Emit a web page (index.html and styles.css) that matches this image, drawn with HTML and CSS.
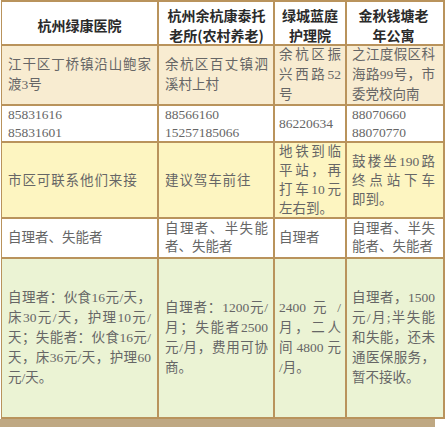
FILE: index.html
```html
<!DOCTYPE html>
<html lang="zh-CN">
<head>
<meta charset="utf-8">
<title>养老机构</title>
<link rel="stylesheet" href="styles.css">
</head>
<body>
<div class="tbl">
  <div class="c c1 hd"><span class="l">杭州绿康医院</span></div>
  <div class="c c2 hd"><span class="l">杭州余杭康泰托</span><span class="l">老所(农村养老)</span></div>
  <div class="c c3 hd"><span class="l">绿城蓝庭</span><span class="l">护理院</span></div>
  <div class="c c4 hd"><span class="l">金秋钱塘老</span><span class="l">年公寓</span></div>

  <div class="c c1 addr"><span class="l">江干区丁桥镇沿山鲍家</span><span class="l">渡3号</span></div>
  <div class="c c2 addr"><span class="l">余杭区百丈镇泗</span><span class="l">溪村上村</span></div>
  <div class="c c3 addr"><span class="l">余杭区振</span><span class="l">兴西路52</span><span class="l">号</span></div>
  <div class="c c4 addr"><span class="l">之江度假区科</span><span class="l">海路99号，市</span><span class="l">委党校向南</span></div>

  <div class="c c1 tel"><span class="l">85831616</span><span class="l">85831601</span></div>
  <div class="c c2 tel"><span class="l">88566160</span><span class="l">15257185066</span></div>
  <div class="c c3 tel"><span class="l">86220634</span></div>
  <div class="c c4 tel"><span class="l">88070660</span><span class="l">88070770</span></div>

  <div class="c c1 way wide"><span class="l">市区可联系他们来接</span></div>
  <div class="c c2 way wide"><span class="l">建议驾车前往</span></div>
  <div class="c c3 way"><span class="l">地铁到临</span><span class="l">平站，再</span><span class="l">打车10元</span><span class="l">左右到。</span></div>
  <div class="c c4 way"><span class="l">鼓楼坐190路</span><span class="l">终点站下车</span><span class="l">即到。</span></div>

  <div class="c c1 kind"><span class="l">自理者、失能者</span></div>
  <div class="c c2 kind"><span class="l">自理者、半失能</span><span class="l">者、失能者</span></div>
  <div class="c c3 kind"><span class="l">自理者</span></div>
  <div class="c c4 kind"><span class="l">自理者、半失</span><span class="l">能者、失能者</span></div>

  <div class="c c1 price"><span class="l">自理者：伙食16元/天，</span><span class="l">床30元/天，护理10元/</span><span class="l">天；失能者：伙食16元/</span><span class="l">天，床36元/天，护理60</span><span class="l">元/天。</span></div>
  <div class="c c2 price"><span class="l">自理者：1200元/</span><span class="l">月；失能者2500</span><span class="l">元/月，费用可协</span><span class="l">商。</span></div>
  <div class="c c3 price"><span class="l">2400 元 /</span><span class="l">月，二人</span><span class="l">间4800元</span><span class="l">/月。</span></div>
  <div class="c c4 price"><span class="l">自理者，1500</span><span class="l">元/月;半失能</span><span class="l">和失能，还未</span><span class="l">通医保服务，</span><span class="l">暂不接收。</span></div>
</div>
<div class="strip"></div>
</body>
</html>
```

FILE: styles.css
```css
* { box-sizing: border-box; }
html, body { margin: 0; padding: 0; background: #ffffff; }
body {
  font-family: "Liberation Serif", "Noto Sans CJK SC", serif;
  font-size: 13.5px;
  color: #666666;
}
.tbl {
  display: grid;
  width: max-content;
  margin-left: 1px;
  grid-template-columns: 155px 114px 70px 96px;
  grid-template-rows: 42px 58px 35px 74px 38px 158px;
  gap: 2px;
  padding: 2px 2px 2px 1px;
  background: #b9935c;
}
.c {
  display: flex;
  flex-direction: column;
  justify-content: center;
  min-width: 0;
  overflow: visible;
}
.c1 { padding: 0 6px; }
.c2 { padding: 0 5px 0 6px; }
.c3 { padding: 0 4px; }
.c4 { padding: 0 8px 0 5px; }
.l {
  display: block;
  white-space: nowrap;
  text-align: justify;
  text-align-last: justify;
}
.l:last-child { text-align-last: left; }

.hd {
  background: #ffffff;
  font-family: "Noto Sans CJK SC", sans-serif;
  font-weight: 700;
  font-size: 14px;
  color: #2a2a2a;
  line-height: 20px;
  padding-top: 4px;
}
.hd .l, .hd .l:last-child { text-align: center; text-align-last: center; }
.addr { background: #f8ecd1; line-height: 20px; }
.tel { background: #ffffff; line-height: 18px; }
.way { background: #fdf5c1; line-height: 19px; }
.kind { background: #ffffff; line-height: 18px; }
.price { background: #ebf3d4; line-height: 20px; }
.wide { letter-spacing: 0.9px; }
.strip {
  width: 435px;
  height: 8px;
  background: #bfa883;
}
```
